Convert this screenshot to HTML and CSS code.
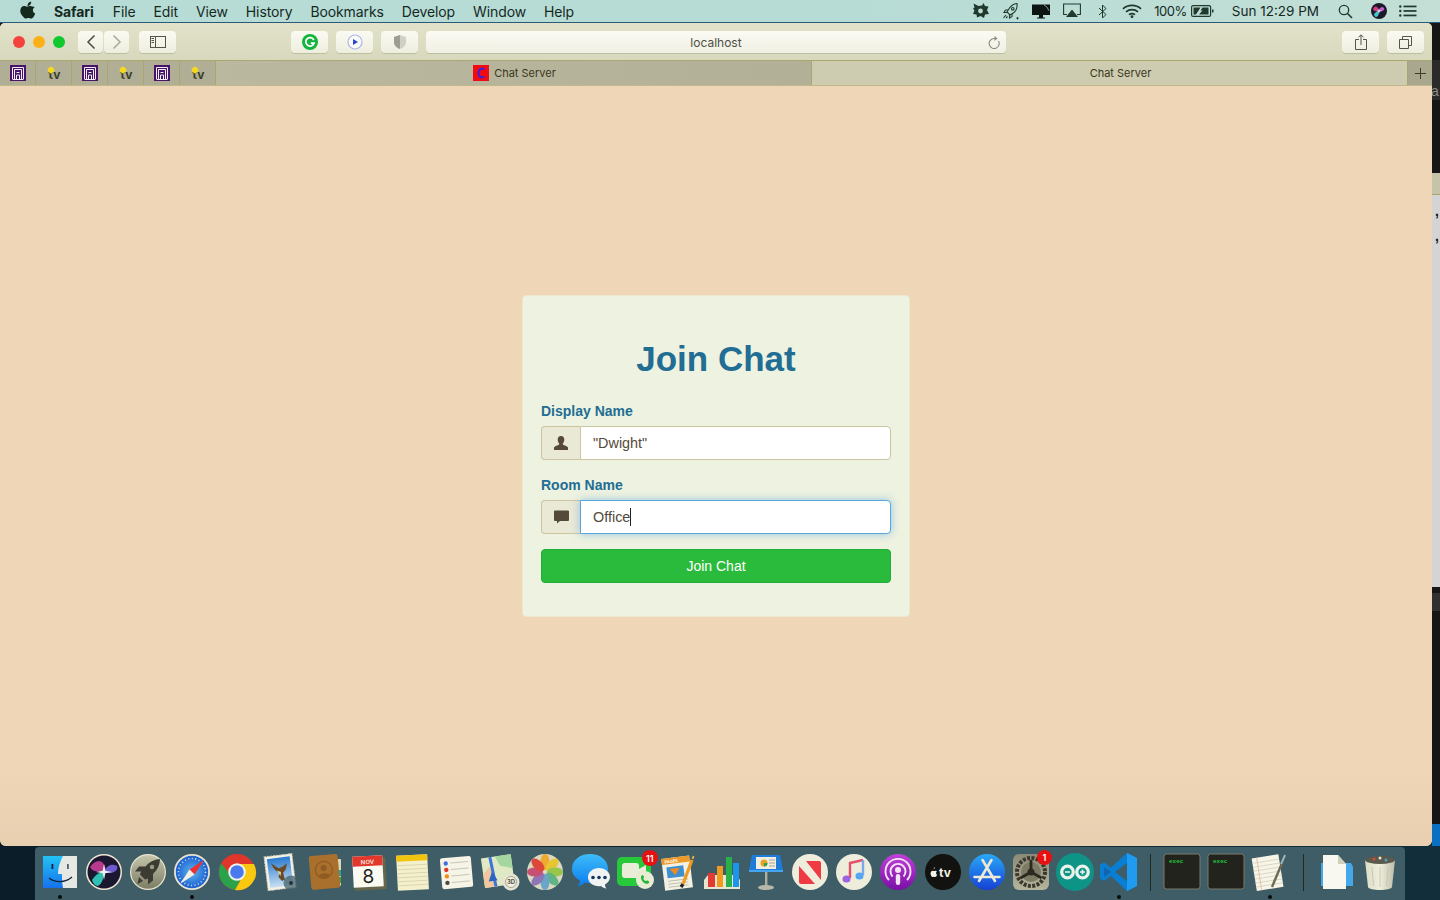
FILE: index.html
```html
<!DOCTYPE html>
<html lang="en">
<head>
<meta charset="utf-8">
<title>Chat Server</title>
<link rel="stylesheet" href="styles.css">
</head>
<body>
<div class="desktop">
  <header class="menubar">
    <nav class="menu-left">
      <svg class="apple" width="16" height="18" viewBox="0 0 16 18"><path fill="#15291f" d="M11.2 0.8c.1 1.2-.4 2.200-1 2.900-.7.8-1.700 1.300-2.700 1.200-.1-1.100.4-2.200 1-2.900C9.200 1.200 10.300.7 11.200.8zM14.700 6.300c-1.100.7-1.800 1.700-1.800 3 0 1.500.9 2.700 2.300 3.300-.4 1.100-.9 2.200-1.600 3.100-.7 1-1.500 1.800-2.500 1.800s-1.500-.6-2.700-.6-1.800.6-2.700.6c-1.100 0-1.900-.9-2.700-2C.9 13.600.2 11.500.3 9.500.4 7 2 5.100 4.200 5.100c1.100 0 2.100.7 2.900.7.800 0 1.900-.8 3.200-.7 1.800.1 3.300.8 4.400 1.200z"/></svg>
      <span class="menu-item brand">Safari</span>
      <span class="menu-item">File</span>
      <span class="menu-item">Edit</span>
      <span class="menu-item">View</span>
      <span class="menu-item">History</span>
      <span class="menu-item">Bookmarks</span>
      <span class="menu-item">Develop</span>
      <span class="menu-item">Window</span>
      <span class="menu-item">Help</span>
    </nav>
    <div class="menu-right">
      <svg class="st st-avast" width="18" height="18" viewBox="0 0 18 18"><path fill="#1f3a2c" d="M1.500 1.500l5 2.500 3.500-.5 1.500-2.500 1.500 3 3.500.5-1.500 3.500 2 4-4 .5-1 3.500-3.500-2-3.500 1.500-.5-3-3.500-.5 1.500-3.500L1 6.500l1.500-1z"/><circle cx="8.500" cy="9" r="2.400" fill="#bcdcd2"/></svg>
      <svg class="st st-rocket" width="18" height="18" viewBox="0 0 18 18" fill="none" stroke="#1f3a2c" stroke-width="1.100"><path d="M15 1.500c-3.500.3-6.500 2.500-8.500 6L5 10l3 3 2.500-1.500c3.500-2 5-5.500 4.500-10z"/><circle cx="10.800" cy="6.800" r="1.300"/><path d="M6 8H3.500L2 10.500h3M10 12v2.500L7.500 16v-3M4 13l-2.500 3M5.500 14.500L4 16"/><path d="M15.500 15v2.500M14.200 16.200h2.600" stroke-width=".9"/></svg>
      <svg class="st st-display" width="18" height="18" viewBox="0 0 18 18"><path fill="#0c1512" d="M0 2.500h18v10.500H11v2.500h2v1H5v-1h2V13H0z"/><path fill="none" stroke="#d3e3da" stroke-width=".7" d="M12 2.800c2 .9 3.800 3.200 4.800 5.800"/></svg>
      <svg class="st st-airplay" width="18" height="16" viewBox="0 0 18 16"><path fill="none" stroke="#1f3a2c" stroke-width="1.100" d="M4 11.500H.6V1h16.800v10.500H14"/><path fill="#1f3a2c" d="M9 6.500l6 7.500H3z"/></svg>
      <svg class="st st-bt" width="9" height="15" viewBox="0 0 9 15"><path fill="none" stroke="#1f3a2c" stroke-width="1" d="M1 4l7 6.500L4.500 14V1L8 4.500 1 11"/></svg>
      <svg class="st st-wifi" width="20" height="14" viewBox="0 0 20 14" fill="none" stroke="#1f3a2c" stroke-width="1.700"><path d="M1 4.800c5-4.600 13-4.600 18 0"/><path d="M4 7.800c3.400-3 8.600-3 12 0"/><path d="M7 10.600c1.800-1.300 4.200-1.300 6 0"/><circle cx="10" cy="12.600" r=".6" fill="#1f3a2c"/></svg>
      <span class="status-text pct">100%</span>
      <svg class="st st-batt" width="23" height="12" viewBox="0 0 23 12"><rect x=".6" y=".6" width="19" height="10.800" rx="1.500" fill="none" stroke="#1f3a2c" stroke-width="1.200"/><path fill="#1f3a2c" d="M2.500 2.500h7L5 9.500H2.500zM8 9.500l3.500-4H9.500l2-3h6v7zM21 4.500h1.500v3H21z"/></svg>
      <span class="status-text clock">Sun 12:29 PM</span>
      <svg class="st st-search" width="15" height="15" viewBox="0 0 15 15" fill="none" stroke="#1f3a2c" stroke-width="1.300"><circle cx="6" cy="6" r="4.700"/><path d="M9.500 9.500l4.500 4.500" stroke-width="1.600"/></svg>
      <svg class="st st-siri" width="16" height="16" viewBox="0 0 16 16"><circle cx="8" cy="8" r="8" fill="#1c1a2a"/><path fill="#d7397f" d="M2 6c2-4 5-3 6 2-3 0-5 1-6-2z"/><path fill="#3fc7d6" d="M3 11c3-3 4-3 5-3 0 3-1 6-3 6-1 0-2-2-2-3z"/><path fill="#c45fd8" d="M8 8c1-4 3-5 5-3 1 2-2 4-5 3z"/><path fill="#f2f4f4" d="M8 5l.6 2.400L11 8l-2.400.6L8 11l-.6-2.400L5 8l2.400-.6z"/></svg>
      <svg class="st st-list" width="18" height="12" viewBox="0 0 18 12" fill="#1f3a2c"><circle cx="1.300" cy="1.500" r="1.200"/><circle cx="1.300" cy="6" r="1.200"/><circle cx="1.300" cy="10.500" r="1.200"/><rect x="4.500" y=".6" width="13" height="1.700"/><rect x="4.500" y="5.100" width="13" height="1.700"/><rect x="4.500" y="9.600" width="13" height="1.700"/></svg>
    </div>
  </header>

  <div class="back-window">
    <div class="back-dark"><span class="back-a">a</span></div>
    <div class="back-gray"></div>
    <div class="back-light"><span class="back-q">,</span><span class="back-q">,</span></div>
    <div class="back-lower"></div>
    <div class="back-blue"></div>
  </div>

  <section class="window">
    <div class="toolbar">
      <div class="lights"><i class="light red"></i><i class="light amber"></i><i class="light green"></i></div>
      <div class="nav-pair">
        <button class="tb tb-nav"><svg width="10" height="16" viewBox="0 0 10 16"><path fill="none" stroke="#4c4c40" stroke-width="1.500" d="M8.500 1.500L2 8l6.500 6.500"/></svg></button>
        <button class="tb tb-nav"><svg width="10" height="16" viewBox="0 0 10 16"><path fill="none" stroke="#a8a898" stroke-width="1.500" d="M1.500 1.500L8 8l-6.500 6.500"/></svg></button>
      </div>
      <button class="tb tb-wide tb-side"><svg width="16" height="12" viewBox="0 0 16 12"><rect x=".5" y=".5" width="15" height="11" fill="none" stroke="#55554a"/><path stroke="#55554a" d="M5.500 0v12M1.500 2.500h2.500M1.500 4.500h2.500M1.500 6.500h2.500" fill="none"/></svg></button>
      <button class="tb tb-wide tb-gram"><svg width="16" height="16" viewBox="0 0 16 16"><circle cx="8" cy="8" r="8" fill="#14b53e"/><path fill="none" stroke="#fff" stroke-width="1.800" d="M11.800 6A4.200 4.200 0 1 0 12 9.200H8.800"/></svg></button>
      <button class="tb tb-wide tb-play"><svg width="16" height="16" viewBox="0 0 16 16"><circle cx="8" cy="8" r="7" fill="#fbfbf5" stroke="#aab5ee" stroke-width="1.200"/><path fill="#2b45d6" d="M6 5l5 3-5 3z"/></svg></button>
      <button class="tb tb-wide tb-shield"><svg width="12" height="14" viewBox="0 0 12 14"><path fill="#d0d0c4" d="M6 0l6 2v5c0 3.500-3 6-6 7-3-1-6-3.500-6-7V2z"/><path fill="#9d9d92" d="M6 0v14c-3-1-6-3.500-6-7V2z"/></svg></button>
      <div class="urlbar">
        <span class="url">localhost</span>
        <svg class="reload" width="12" height="13" viewBox="0 0 12 13"><path fill="none" stroke="#8a8a7e" stroke-width="1.100" d="M10.500 5A5 5 0 1 1 6 2.500h1.500"/><path fill="#8a8a7e" d="M6.500 0l3 2.500-3 2.500z"/></svg>
      </div>
      <button class="tb tb-wide tb-share"><svg width="12" height="16" viewBox="0 0 12 16"><path fill="none" stroke="#55554a" d="M4 5.500H.5v10h11v-10H8M6 11V1M3.500 3.300L6 .8l2.500 2.500"/></svg></button>
      <button class="tb tb-wide tb-tabs"><svg width="13" height="13" viewBox="0 0 13 13"><path fill="none" stroke="#55554a" d="M.5 3.500h9v9h-9zM3.500 3.500V.5h9v9h-3"/></svg></button>
    </div>
    <div class="tabbar">
      <div class="pin"><svg width="16" height="16" viewBox="0 0 16 16"><use href="#n-fav"/></svg></div>
      <div class="pin"><span class="tv-star"></span><span class="tv">tv</span></div>
      <div class="pin"><svg width="16" height="16" viewBox="0 0 16 16"><use href="#n-fav"/></svg></div>
      <div class="pin"><span class="tv-star"></span><span class="tv">tv</span></div>
      <div class="pin"><svg width="16" height="16" viewBox="0 0 16 16"><use href="#n-fav"/></svg></div>
      <div class="pin"><span class="tv-star"></span><span class="tv">tv</span></div>
      <div class="tab tab-off"><svg class="fav-c" width="16" height="16" viewBox="0 0 16 16"><rect width="16" height="16" fill="#f20a12"/><path fill="none" stroke="#3a20d8" stroke-width="2" d="M11.500 4.500C9 2.500 5.500 4 5.500 8s3.500 5.500 6 3.500"/></svg><span>Chat Server</span></div>
      <div class="tab tab-on"><span>Chat Server</span></div>
      <div class="tab-add"><svg width="11" height="11" viewBox="0 0 11 11"><path stroke="#3d3d24" stroke-width="1" d="M5.500 0v11M0 5.500h11"/></svg></div>
    </div>
    <main class="page">
      <form class="card">
        <h1 class="card-title">Join Chat</h1>
        <label class="field-label">Display Name</label>
        <div class="input-group">
          <span class="addon"><svg width="14" height="14" viewBox="0 0 14 14"><path fill="#54493a" d="M7 0c2.200 0 3.300 1.700 3.300 3.700 0 1.400-.6 2.900-1.500 3.700 0 .8.100 1.200.8 1.500 1.700.7 3.800 1.300 4.400 2.500V14H0v-2.600c.6-1.200 2.700-1.800 4.400-2.500.7-.3.800-.7.800-1.500-.9-.8-1.500-2.300-1.500-3.700C3.700 1.700 4.800 0 7 0z"/></svg></span>
          <div class="text-box">"Dwight"</div>
        </div>
        <label class="field-label room-label">Room Name</label>
        <div class="input-group">
          <span class="addon"><svg width="15" height="14" viewBox="0 0 15 14"><path fill="#54493a" d="M1 .5h13a1 1 0 0 1 1 1v8.500a1 1 0 0 1-1 1H6l-3 2.500V11H1a1 1 0 0 1-1-1V1.500a1 1 0 0 1 1-1z"/></svg></span>
          <div class="text-box focused">Office<i class="caret"></i></div>
        </div>
        <button type="button" class="join">Join Chat</button>
      </form>
    </main>
  </section>

  <footer class="dock">
    <div class="dock-item running"><svg viewBox="0 0 44 44"><defs><linearGradient id="fa" x1="0" y1="0" x2="0" y2="1"><stop offset="0" stop-color="#22c3f5"/><stop offset="1" stop-color="#1672ee"/></linearGradient></defs><rect x="5" y="6" width="34" height="32" fill="#e6e8e4"/><path fill="url(#fa)" d="M5 6h20c-3 6-5 11-5 18h4c0 5 0 9 1 14H5z"/><path fill="none" stroke="#11243a" stroke-width="1.300" d="M11 28c6 5 16 5 23-1"/><rect x="13.500" y="14" width="1.800" height="5" fill="#11243a"/><rect x="29" y="14" width="1.800" height="5" fill="#56606a"/></svg></div>
    <div class="dock-item"><svg viewBox="0 0 44 44"><defs><linearGradient id="sa" x1="0" y1="0" x2="1" y2="1"><stop offset="0" stop-color="#c03a88"/><stop offset=".6" stop-color="#2a1f4c"/><stop offset="1" stop-color="#171726"/></linearGradient></defs><circle cx="22" cy="22" r="18" fill="#efe9d3"/><circle cx="22" cy="22" r="16.500" fill="#1b1730"/><path fill="#b83a8c" d="M8 17c6-9 14-8 16 3-6 2-13 3-16-3z"/><path fill="#2fbfb4" d="M10 30c4-6 8-8 12-8 0 5-2 12-6 14-3 0-5-3-6-6z"/><path fill="#6f5bd0" d="M22 22c3-7 8-9 13-6 2 5-6 9-13 6z"/><path fill="#e9f2ef" d="M22 14l1.300 6.700L30 22l-6.700 1.300L22 30l-1.300-6.700L14 22l6.700-1.300z"/></svg></div>
    <div class="dock-item"><svg viewBox="0 0 44 44"><defs><linearGradient id="la" x1="0" y1="0" x2="0" y2="1"><stop offset="0" stop-color="#c5c5ac"/><stop offset="1" stop-color="#7d7d66"/></linearGradient></defs><circle cx="22" cy="22" r="18" fill="#e9e6cf"/><circle cx="22" cy="22" r="16.800" fill="url(#la)"/><path fill="#3c3c33" d="M34 9c-6 .5-11 3-14.500 7.500H13l-4 5h6l-1 3 5 5 3-1v6l5-4v-6.500C31.500 20 33.800 15 34 9z"/><path fill="#3c3c33" d="M13 27l4 4-5.500 3z"/><circle cx="26" cy="17" r="2.200" fill="#9a9a82"/></svg></div>
    <div class="dock-item running"><svg viewBox="0 0 44 44"><defs><radialGradient id="sf"><stop offset="0" stop-color="#5fb6f0"/><stop offset="1" stop-color="#1b5fcf"/></radialGradient></defs><circle cx="22" cy="22" r="18" fill="#e8e6d2"/><circle cx="22" cy="22" r="16.200" fill="url(#sf)"/><circle cx="22" cy="22" r="13.500" fill="none" stroke="#cfe2f2" stroke-width="1.600" stroke-dasharray="1 2.500"/><path fill="#f03030" d="M34 10L19.500 19.500l5 5z"/><path fill="#f1efe2" d="M10 34l14.500-9.500-5-5z"/></svg></div>
    <div class="dock-item"><svg viewBox="0 0 44 44"><circle cx="22" cy="22" r="18" fill="#e0352b"/><path fill="#2aa24a" d="M6.200 13.200A18 18 0 0 0 20 39.900L29 24 15 24z"/><path fill="#f9c80f" d="M22 14h17a18 18 0 0 1-19 25.900L29 24z"/><circle cx="22" cy="22" r="8.800" fill="#f2f2e8"/><circle cx="22" cy="22" r="6.800" fill="#4a7bee"/></svg></div>
    <div class="dock-item"><svg viewBox="0 0 44 44"><defs><linearGradient id="ma" x1="0" y1="0" x2="0" y2="1"><stop offset="0" stop-color="#2a7bd0"/><stop offset="1" stop-color="#c9dff0"/></linearGradient></defs><g transform="rotate(-7 22 22)"><rect x="7" y="5" width="28" height="34" fill="#f4f2e6" stroke="#cdcab8" stroke-dasharray="2 1"/><rect x="9.500" y="7.500" width="23" height="29" fill="url(#ma)"/><path fill="#6b4a25" d="M13 12l7 6 4-1 5-3-2 6-3 3 1 7-3 1-3-4 1-4-3-3-2-3z"/><path fill="#e4d3a8" d="M18 20l4 2-1 4z"/></g><circle cx="32" cy="33" r="7.500" fill="#44606a" opacity=".75"/><circle cx="32" cy="33" r="2" fill="#20343c"/></svg></div>
    <div class="dock-item"><svg viewBox="0 0 44 44"><rect x="28" y="9" width="10" height="27" rx="1" fill="#dfd9b8"/><rect x="35" y="13" width="3" height="6" fill="#d9d9b0"/><rect x="35" y="20" width="3" height="6" fill="#1ea8a0"/><rect x="35" y="27" width="3" height="6" fill="#37a83a"/><g transform="rotate(-5 20 22)"><rect x="7" y="5" width="29" height="34" rx="2.500" fill="#a96f2d"/><circle cx="21" cy="20" r="8.500" fill="none" stroke="#8f5b22" stroke-width="1.200"/><circle cx="21" cy="18" r="3" fill="#8f5b22"/><path fill="#8f5b22" d="M15.500 26c1-3.500 10-3.500 11 0a8.500 8.500 0 0 1-11 0z"/></g></svg></div>
    <div class="dock-item"><svg viewBox="0 0 44 44"><g transform="rotate(-3 22 22)"><rect x="7" y="8" width="32" height="32" fill="#66664c"/><rect x="6" y="6" width="30" height="31" fill="#fafaf2"/><rect x="6" y="6" width="30" height="10" fill="#e2372b"/><text class="cal-m" x="21" y="14" text-anchor="middle">NOV</text><text class="cal-d" x="21" y="33" text-anchor="middle">8</text></g></svg></div>
    <div class="dock-item"><svg viewBox="0 0 44 44"><g transform="rotate(-3 22 22)"><rect x="6" y="5" width="31" height="35" fill="#f4f0cd"/><rect x="6" y="5" width="31" height="6" fill="#f2c40f"/><path stroke="#d6d1a4" stroke-width=".8" d="M6 15h31M6 19h31M6 23h31M6 27h31M6 31h31M6 35h31"/></g></svg></div>
    <div class="dock-item"><svg viewBox="0 0 44 44"><g transform="rotate(-5 22 22)"><rect x="6" y="7" width="31" height="31" rx="2" fill="#f5f4e6"/><circle cx="11.500" cy="12.500" r="2.200" fill="#3d72e0"/><circle cx="11.500" cy="19" r="2.200" fill="#e33328"/><circle cx="11.500" cy="25.500" r="2.200" fill="#ef8c12"/><circle cx="11.500" cy="32" r="2.200" fill="#4a4a44"/><path stroke="#bdbcaa" stroke-width=".8" d="M16 12.500h18M16 19h18M16 25.500h18M16 32h18"/></g></svg></div>
    <div class="dock-item"><svg viewBox="0 0 44 44"><g transform="rotate(-8 20 22)"><rect x="4" y="6" width="30" height="30" fill="#dfe9c4"/><path fill="#f0c79f" d="M4 22l9-8 4 22H4z"/><path fill="#a4d6a0" d="M18 6h16v14L22 16z"/><path stroke="#3d74d8" stroke-width="3" fill="none" d="M13 6l2 30"/><path fill="#2a63c4" d="M13 21l4.500 9h-9z"/></g><circle cx="32" cy="32" r="8.500" fill="#e5e4d2"/><circle cx="32" cy="32" r="5.500" fill="#f1f0e3" stroke="#a9a890"/><text class="map-3d" x="32" y="34" text-anchor="middle">3D</text></svg></div>
    <div class="dock-item"><svg viewBox="0 0 44 44"><circle cx="22" cy="22" r="18" fill="#dcd9c0"/><g opacity=".88"><ellipse cx="22" cy="12" rx="4.500" ry="8" fill="#f3a21c"/><ellipse cx="22" cy="12" rx="4.500" ry="8" fill="#e9c31f" transform="rotate(45 22 22)"/><ellipse cx="22" cy="12" rx="4.500" ry="8" fill="#8fc43a" transform="rotate(90 22 22)"/><ellipse cx="22" cy="12" rx="4.500" ry="8" fill="#4fae7c" transform="rotate(135 22 22)"/><ellipse cx="22" cy="12" rx="4.500" ry="8" fill="#5a9fcb" transform="rotate(180 22 22)"/><ellipse cx="22" cy="12" rx="4.500" ry="8" fill="#8568b5" transform="rotate(225 22 22)"/><ellipse cx="22" cy="12" rx="4.500" ry="8" fill="#c53f6c" transform="rotate(270 22 22)"/><ellipse cx="22" cy="12" rx="4.500" ry="8" fill="#df3528" transform="rotate(315 22 22)"/></g></svg></div>
    <div class="dock-item"><svg viewBox="0 0 44 44"><defs><linearGradient id="mg" x1="0" y1="0" x2="0" y2="1"><stop offset="0" stop-color="#3ebdf8"/><stop offset="1" stop-color="#0b7cf0"/></linearGradient></defs><path fill="url(#mg)" d="M22 4c10 0 18 6 18 15 0 8-8 14-18 14-2 0-4 0-5.500-.5-1.500 2-4 3.500-7 3.800 1.500-1.500 2.500-3.500 2.500-5.800C7 28 4 24 4 19 4 10 12 4 22 4z"/><path fill="#f0f3f2" d="M31 18c6 0 11 4 11 9 0 3-2 6-5 7.500 0 1.500.5 3 1.500 4-2 0-4-1-5.500-2.500-.8.100-1.500.2-2 .2-6 0-11-3.800-11-9S25 18 31 18z"/><circle cx="25" cy="27.500" r="1.800" fill="#13385c"/><circle cx="31" cy="27.500" r="1.800" fill="#13385c"/><circle cx="37" cy="27.500" r="1.800" fill="#13385c"/></svg></div>
    <div class="dock-item badged"><svg viewBox="0 0 44 44"><rect x="5" y="7" width="34" height="29" rx="5" fill="#27c83a"/><rect x="10" y="13" width="17" height="15" rx="3" fill="#e9ecd6"/><path fill="#e9ecd6" d="M27 19l7-4v12l-7-4z"/><circle cx="33" cy="30" r="9" fill="#e8ecd2"/><path fill="#22b636" d="M29.500 25.500c1-.8 2-.2 2.500 1.200.2.800-.2 1.400-.8 1.800.4 1.200 1.300 2.100 2.500 2.600.5-.5 1.100-.9 1.900-.6 1.300.5 2 1.400 1.200 2.400-1.300 1.400-3.300 1.200-5.300-.5-2.200-1.800-3.300-4.800-2-6.900z"/></svg><span class="badge badge-eleven">11</span></div>
    <div class="dock-item"><svg viewBox="0 0 44 44"><g transform="rotate(-7 22 22)"><rect x="7" y="7" width="28" height="32" fill="#f2f1e4"/><rect x="7" y="7" width="28" height="6" fill="#ee9a28"/><text class="pages-t" x="10" y="12">PAGES</text><rect x="11" y="16" width="17" height="11" fill="#3e8fd0"/><path fill="#ef8a22" d="M14 18h10l-5 7z"/><path stroke="#bcbcaa" stroke-width=".9" d="M11 30h20M11 33h20M11 36h20"/></g><path stroke="#222" stroke-width="3.200" d="M25 37l2-3"/><path stroke="#ef9a1f" stroke-width="3.200" d="M27 34l9-24"/><path stroke="#edb445" stroke-width="1.800" d="M36.500 9l1-3"/></svg></div>
    <div class="dock-item"><svg viewBox="0 0 44 44"><path fill="#e8e5d0" d="M4 30l4-5h28l4 5v9H4z"/><rect x="8" y="23" width="7" height="14" fill="#e33a32"/><rect x="17" y="16" width="6" height="21" fill="#f09a1e"/><rect x="26" y="7" width="6" height="30" fill="#2ab04a"/><rect x="33" y="13" width="6" height="24" fill="#1b96ea"/></svg></div>
    <div class="dock-item"><svg viewBox="0 0 44 44"><path fill="#1f7bd8" d="M8 5h28l3 15H5z"/><path fill="#43a6ee" d="M5 20h34v2H5z"/><rect x="12" y="7" width="20" height="12" fill="#f0eee0"/><circle cx="20" cy="13" r="3.500" fill="#e4a325"/><path fill="#2ea24c" d="M20 13h3.500a3.500 3.500 0 0 1-3.500 3.500z"/><path stroke="#9b9b8c" stroke-width=".9" d="M25 10h6M25 13h6M25 16h6"/><rect x="21" y="22" width="2.400" height="14" fill="#aeae9e"/><ellipse cx="22" cy="37.500" rx="8" ry="2.500" fill="#b9b8a8"/></svg></div>
    <div class="dock-item"><svg viewBox="0 0 44 44"><circle cx="22" cy="22" r="18" fill="#efeedd"/><path fill="#ef3a44" d="M18 11h13a2 2 0 0 1 2 2v17z"/><path fill="#ef3a44" d="M11 16l16 18H13a2 2 0 0 1-2-2z"/></svg></div>
    <div class="dock-item"><svg viewBox="0 0 44 44"><circle cx="22" cy="22" r="18" fill="#eeecdb"/><path fill="none" stroke="#e3506a" stroke-width="2.400" d="M18 28V13l13-3"/><path fill="none" stroke="#7da6ee" stroke-width="2.400" d="M31 10v15"/><ellipse cx="14.500" cy="29" rx="4" ry="3.500" fill="#9d62dd"/><ellipse cx="27.500" cy="26" rx="4" ry="3.500" fill="#55a8ef"/></svg></div>
    <div class="dock-item"><svg viewBox="0 0 44 44"><defs><linearGradient id="pd" x1="0" y1="0" x2="0" y2="1"><stop offset="0" stop-color="#c141d8"/><stop offset="1" stop-color="#7a0fa6"/></linearGradient></defs><circle cx="22" cy="22" r="18" fill="url(#pd)"/><g fill="none" stroke="#f4e6f5" stroke-width="1.900"><path d="M13 30a12.500 12.500 0 1 1 18 0"/><path d="M16.500 26.500a7.500 7.500 0 1 1 11 0"/></g><circle cx="22" cy="20" r="3" fill="#f4e6f5"/><rect x="19.800" y="24" width="4.400" height="11" rx="2.200" fill="#f4e6f5"/></svg></div>
    <div class="dock-item"><svg viewBox="0 0 44 44"><circle cx="22" cy="22" r="18" fill="#121210"/><path fill="#f2f2e8" d="M13.800 17.200c.1.800-.3 1.300-.9 1.700-.4-.6 0-1.300.9-1.700zM16 25c-.5 1.100-1 2-1.800 2-.5 0-.8-.3-1.300-.3s-.9.300-1.300.3c-1 0-2-2-2-3.600 0-1.700 1-2.600 2.100-2.600.6 0 1 .3 1.300.3.300 0 .8-.4 1.500-.3.600 0 1.100.3 1.400.7-1.300.8-1 2.800.4 3.500z"/><text class="tv-dock" x="18" y="27">tv</text></svg></div>
    <div class="dock-item"><svg viewBox="0 0 44 44"><defs><linearGradient id="as" x1="0" y1="0" x2="0" y2="1"><stop offset="0" stop-color="#29a9f8"/><stop offset="1" stop-color="#1740d6"/></linearGradient></defs><circle cx="22" cy="22" r="18" fill="url(#as)"/><path fill="none" stroke="#ece9d6" stroke-width="2.600" stroke-linecap="round" d="M26.500 10L14 31M17.500 10L30 31M9.500 27h25"/></svg></div>
    <div class="dock-item badged"><svg viewBox="0 0 44 44"><defs><linearGradient id="sp" x1="0" y1="0" x2="0" y2="1"><stop offset="0" stop-color="#8c8a76"/><stop offset="1" stop-color="#b5b49c"/></linearGradient></defs><rect x="4" y="4" width="36" height="36" rx="6" fill="url(#sp)"/><circle cx="22" cy="22" r="14" fill="none" stroke="#3a382c" stroke-width="4" stroke-dasharray="3 1.400"/><circle cx="22" cy="22" r="10" fill="#7d7b66"/><path stroke="#2c2a20" stroke-width="2.800" d="M22 22V10M22 22l10.500 6M22 22l-10.500 6"/><circle cx="22" cy="22" r="3.500" fill="#2c2a20"/></svg><span class="badge badge-one">1</span></div>
    <div class="dock-item"><svg viewBox="0 0 44 44"><circle cx="22" cy="22" r="19" fill="#0e9387"/><g fill="none" stroke="#eaf3ea" stroke-width="3.200"><circle cx="14.500" cy="22" r="5.800"/><circle cx="29.500" cy="22" r="5.800"/></g><path stroke="#eaf3ea" stroke-width="1.600" d="M12 22h5M27 22h5M29.500 19.500v5"/></svg></div>
    <div class="dock-item running"><svg viewBox="0 0 44 44"><path fill="#0a7ed2" d="M30 3l10 5v28l-10 5-16-15-7 5-4-2.500V15l4-2.500 7 5z"/><path fill="#1f9cf0" d="M30 3l10 5v28l-10 5z"/><path fill="#3f5d66" d="M30 13L18 22l12 9z"/><path fill="#0e66ae" d="M7 17l7 5-7 5z"/></svg></div>
    <div class="dock-sep"></div>
    <div class="dock-item"><svg viewBox="0 0 44 44"><rect x="4" y="4" width="36" height="35" rx="2.500" fill="#23231d" stroke="#7b7b6b" stroke-width="1"/><text class="exec" x="9" y="13">exec</text></svg></div>
    <div class="dock-item"><svg viewBox="0 0 44 44"><rect x="4" y="4" width="36" height="35" rx="2.500" fill="#23231d" stroke="#7b7b6b" stroke-width="1"/><text class="exec" x="9" y="13">exec</text></svg></div>
    <div class="dock-item running"><svg viewBox="0 0 44 44"><g transform="rotate(-9 20 22)"><rect x="6" y="6" width="27" height="33" fill="#f7f5e8"/><path stroke="#d4d2be" stroke-width=".8" d="M6 11h27M6 15h27M6 19h27M6 23h27M6 27h27M6 31h27M6 35h27"/><path stroke="#e6b79c" stroke-width=".8" d="M11 6v33"/></g><path stroke="#6f6a56" stroke-width="2.400" d="M24 37l13-31"/><path stroke="#9cc0c8" stroke-width="1.800" d="M33 14l4-9"/></svg></div>
    <div class="dock-sep dock-sep-wide"></div>
    <div class="dock-item"><svg viewBox="0 0 44 44"><path fill="#45a8ea" d="M7 13h30l2 4v19H7z"/><path fill="#f8f8f0" d="M9 5h15l8 9v25H9z"/><path fill="#d0cfbb" d="M24 5l8 9h-8z"/></svg></div>
    <div class="dock-item"><svg viewBox="0 0 44 44"><defs><linearGradient id="tr" x1="0" y1="0" x2="1" y2="0"><stop offset="0" stop-color="#dcdcc8"/><stop offset=".5" stop-color="#efeedd"/><stop offset="1" stop-color="#bebda8"/></linearGradient></defs><path fill="url(#tr)" d="M7 10h30l-3 27c-.3 2-6 3-12 3s-11.700-1-12-3z"/><ellipse cx="22" cy="10" rx="15" ry="4" fill="#5a5a4c"/><circle cx="16" cy="9" r="1.500" fill="#d94c3c"/><circle cx="22" cy="8" r="1.500" fill="#e8e6d4"/><circle cx="28" cy="10" r="1.500" fill="#4aa1c9"/><path stroke="#c8c7b2" stroke-width="1" d="M14 17l1.500 19M22 17v20M30 17l-1.500 19"/></svg></div>
  </footer>

  <svg class="defs" width="0" height="0"><defs><g id="n-fav"><rect width="16" height="16" fill="#471468"/><path fill="none" stroke="#f2edf5" stroke-width="1" d="M2.500 14V2.500h11V14M4.500 14V4.500h7V14M2.500 14.500h11"/><path fill="none" stroke="#f2edf5" stroke-width="1" d="M6.500 7.500h3M6.500 14v-4h3v4"/></g></defs></svg>
</div>
</body>
</html>
```

FILE: styles.css
```css
* { box-sizing: border-box; }
html, body { margin: 0; height: 100%; }
body { overflow: hidden; font-family: "Liberation Sans", Arial, sans-serif; }

.desktop {
  position: relative;
  width: 1440px;
  height: 900px;
  overflow: hidden;
  background: radial-gradient(circle at 90% 100%, #12303c, #0b1d28 70%);
}

/* Menu bar */
.menubar {
  height: 23px;
  display: flex;
  align-items: center;
  justify-content: space-between;
  background: linear-gradient(90deg, #b7dcd5 0%, #b7dcd5 60%, #c3dfd6 100%);
  border-bottom: 1px solid #2a5a78;
  font-family: Inter, "Noto Sans", sans-serif;
  font-size: 14px;
  color: #15291f;
}
.menu-left { display: flex; align-items: center; padding-left: 20px; }
.apple { margin-right: 18px; margin-top: -2px; }
.menu-item { margin-right: 17.9px; letter-spacing: -0.1px; }
.brand { font-weight: 700; margin-right: 19px; }
.menu-right { display: flex; align-items: center; padding-right: 23px; }
.status-text { white-space: nowrap; }
.st { flex: none; }
.st-avast { margin-right: 12px; }
.st-rocket { margin-right: 12px; }
.st-display { margin-right: 13px; }
.st-airplay { margin-right: 17px; }
.st-bt { margin-right: 15px; }
.st-wifi { margin-right: 12px; }
.pct { font-size: 13px; margin-right: 4px; letter-spacing: -0.5px; }
.st-batt { margin-right: 18px; }
.clock { font-size: 13.5px; margin-right: 19px; }
.st-search { margin-right: 18px; }
.st-siri { margin-right: 12px; }

/* Window behind */
.back-window {
  position: absolute;
  left: 1432px;
  top: 23px;
  width: 8px;
  height: 823px;
  display: flex;
  flex-direction: column;
}
.back-dark {
  height: 150px;
  background: linear-gradient(#161616 0 37px, #2a2a2a 37px 77px, #161616 77px);
  padding-top: 60px;
  color: #8a8a8a;
  font-size: 14px;
}
.back-a { display: block; margin-left: -1px; }
.back-gray { height: 22px; background: #c5c3a9; border-bottom: 1px solid #a8a66c; }
.back-light { height: 392px; background: #d4d4d4; color: #111; font-size: 14px; font-weight: 700; padding-top: 8px; }
.back-q { display: block; height: 25px; margin-left: 3px; }
.back-lower { height: 237px; background: linear-gradient(#161616 0 6px, #303030 6px 24px, #161616 24px); }
.back-blue { height: 22px; background: #0b6fc2; }

/* Browser window */
.window {
  position: absolute;
  left: 0;
  top: 23px;
  width: 1432px;
  height: 823px;
  display: flex;
  flex-direction: column;
  border-radius: 5px 5px 6px 6px;
  overflow: hidden;
  background: #efd6b6;
}
.toolbar {
  height: 37px;
  flex: none;
  display: flex;
  align-items: center;
  padding: 1px 8px 0 13px;
  background: linear-gradient(#e2e2ca, #d8d8bd);
}
.lights { display: flex; gap: 8px; margin-right: 13px; }
.light { width: 12px; height: 12px; border-radius: 50%; display: block; }
.red { background: #f4433c; }
.amber { background: #fbb016; }
.green { background: #10c92e; }
.nav-pair { display: flex; gap: 1px; margin-right: 10px; }
.tb {
  height: 22px;
  padding: 0;
  display: flex;
  align-items: center;
  justify-content: center;
  border: 0;
  border-radius: 4px;
  background: linear-gradient(#fafaf2, #eeeedf);
  box-shadow: 0 1px 0 #bdbd9f;
}
.tb-nav { width: 25px; }
.tb-wide { width: 37px; }
.tb-side { margin-right: 115px; }
.tb-gram, .tb-play { margin-right: 8px; }
.tb-shield { margin-right: 8px; }
.urlbar {
  position: relative;
  width: 580px;
  height: 22px;
  display: flex;
  align-items: center;
  justify-content: center;
  border-radius: 4px;
  background: linear-gradient(#fbfbf4, #efefe2);
  box-shadow: 0 1px 0 #bdbd9f;
  margin-right: 336px;
  font-family: Inter, sans-serif;
  font-size: 12px;
  color: #4f4f45;
}
.reload { position: absolute; right: 6px; top: 5px; }
.tb-share { margin-right: 8px; }

.tabbar {
  height: 26px;
  flex: none;
  display: flex;
  background: #b5b39a;
  border-top: 1px solid #aaa86e;
  border-bottom: 1px solid #bfb98a;
  font-family: Inter, sans-serif;
  font-size: 11px;
  color: #3b3620;
}
.pin {
  position: relative;
  width: 36px;
  flex: none;
  display: flex;
  align-items: center;
  justify-content: center;
  border-right: 1px solid #a8a66c;
  background: #b0ae95;
}
.tv { font-weight: 700; font-size: 12px; color: #3c3c28; margin-top: 4px; margin-left: 2px; line-height: 1; }
.tv-star {
  position: absolute;
  left: 12px;
  top: 6px;
  width: 6px;
  height: 6px;
  background: #f5d91e;
  border-radius: 2px;
  transform: rotate(45deg);
}
.tab {
  width: 596px;
  flex: none;
  display: flex;
  align-items: center;
  justify-content: center;
  gap: 5px;
  border-right: 1px solid #a8a66c;
}
.tab-off { background: linear-gradient(90deg, #bab89f, #b2b097); padding-left: 2px; }
.tab-on { background: #cdcbb0; padding-left: 22px; }
.tab-add {
  flex: 1;
  display: flex;
  align-items: center;
  justify-content: center;
  background: #a9a78d;
}

/* Page */
.page {
  flex: 1;
  display: flex;
  align-items: center;
  justify-content: center;
  padding-bottom: 20px;
  background: linear-gradient(#efd6b6 0%, #efd6b6 90%, #e8cfb1 100%);
}
.card {
  width: 388px;
  height: 322px;
  padding: 19px 18px 0;
  border-radius: 4px;
  background: #eef2e0;
  border: 1px solid #ece7d0;
}
.card-title {
  margin: 23px 0 0;
  height: 42px;
  line-height: 42px;
  font-size: 35px;
  font-weight: 700;
  text-align: center;
  color: #216d94;
}
.field-label {
  display: block;
  margin-top: 21px;
  height: 20px;
  line-height: 20px;
  font-size: 14px;
  font-weight: 700;
  color: #216d94;
}
.room-label { margin-top: 15px; }
.input-group {
  display: flex;
  height: 34px;
  margin-top: 5px;
  font-size: 14.4px;
  color: #54493a;
}
.addon {
  width: 39px;
  flex: none;
  display: flex;
  align-items: center;
  justify-content: center;
  background: #e9e9d6;
  border: 1px solid #cdc5a0;
  border-right: 0;
  border-radius: 4px 0 0 4px;
}
.text-box {
  flex: 1;
  display: flex;
  align-items: center;
  padding-left: 12px;
  background: #fff;
  border: 1px solid #cdc5a0;
  border-radius: 0 4px 4px 0;
}
.focused {
  border-color: #5aa6dc;
  box-shadow: 0 0 8px rgba(90, 166, 220, .6);
}
.caret { display: block; width: 1px; height: 18px; background: #222; }
.join {
  display: block;
  width: 100%;
  height: 34px;
  margin-top: 15px;
  padding: 0;
  border: 1px solid #1fae37;
  border-radius: 4px;
  background: #2abb3c;
  color: #fff;
  font-family: "Liberation Sans", Arial, sans-serif;
  font-size: 14px;
}

/* Dock */
.dock {
  position: absolute;
  left: 35px;
  top: 847px;
  width: 1370px;
  height: 53px;
  display: flex;
  padding: 3px 3px 0;
  background: #3f5d66;
  border-radius: 4px 4px 0 0;
}
.dock-item { position: relative; width: 44.125px; height: 44px; flex: none; }
.dock-item svg { display: block; width: 44px; height: 44px; margin: 0 auto; }
.running::after {
  content: "";
  position: absolute;
  left: 20px;
  top: 45px;
  width: 4px;
  height: 4px;
  border-radius: 50%;
  background: #0b0b0b;
}
.dock-sep {
  width: 19px;
  flex: none;
  display: flex;
  justify-content: center;
}
.dock-sep-wide { width: 21.6px; }
.dock-sep::before {
  content: "";
  width: 1px;
  height: 37px;
  margin-top: 4px;
  background: #1c2c20;
}
.badge {
  position: absolute;
  display: flex;
  align-items: center;
  justify-content: center;
  border-radius: 50%;
  background: #e81010;
  color: #fff;
  font-family: Inter, sans-serif;
  font-weight: 600;
  font-size: 9px;
}
.badge-eleven { right: -2px; top: 0; width: 16px; height: 16px; }
.badge-one { right: 1px; top: 0; width: 15px; height: 15px; }
.cal-m { font: 700 6px Inter, sans-serif; fill: #f7ddd0; }
.cal-d { font: 400 19px Inter, sans-serif; fill: #222; }
.map-3d { font: 700 6px Inter, sans-serif; fill: #55553f; }
.pages-t { font: 700 4px Inter, sans-serif; fill: #fff; }
.tv-dock { font: 700 12px Inter, sans-serif; fill: #f2f2e8; }
.exec { font: 700 6px "Liberation Mono", monospace; fill: #1fc23a; }
.defs { position: absolute; }
```
